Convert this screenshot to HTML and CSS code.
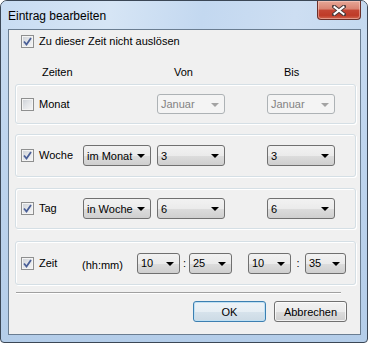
FILE: index.html
```html
<!DOCTYPE html>
<html lang="de">
<head>
  <meta charset="UTF-8">
  <meta name="viewport" content="width=device-width, initial-scale=1.0">
  <title>Eintrag bearbeiten</title>
  <link rel="stylesheet" href="styles.css">
</head>
<body>

<div class="window">
  <div class="titlebar">
    <span class="title">Eintrag bearbeiten</span>
    <div class="close-btn">
      <svg width="14" height="11" viewBox="0 0 14 11">
        <path d="M2 1.5 L12 9.5 M12 1.5 L2 9.5" stroke="#4a3a3a" stroke-width="4" stroke-linecap="square"/>
        <path d="M2.5 2 L11.5 9 M11.5 2 L2.5 9" stroke="#fff" stroke-width="2" stroke-linecap="square"/>
      </svg>
    </div>
  </div>

  <div class="client">
    <div class="option top-option">
      <span class="check checked"><svg width="9" height="9" viewBox="0 0 9 9"><path d="M1 4.5 L3.5 7.5 L8 1" fill="none" stroke="#4a5f97" stroke-width="1.8"/></svg></span>
      Zu dieser Zeit nicht auslösen
    </div>

    <div class="headers">
      <span class="h-zeiten">Zeiten</span>
      <span class="h-von">Von</span>
      <span>Bis</span>
    </div>

    <div class="group group-monat">
      <div class="option row-label"><span class="check"></span>Monat</div>
      <div class="slot"></div>
      <div class="combo disabled"><span class="combo-text">Januar</span><i class="arrow"></i></div>
      <div class="combo disabled bis"><span class="combo-text">Januar</span><i class="arrow"></i></div>
    </div>

    <div class="group group-woche">
      <div class="option row-label"><span class="check checked"><svg width="9" height="9" viewBox="0 0 9 9"><path d="M1 4.5 L3.5 7.5 L8 1" fill="none" stroke="#4a5f97" stroke-width="1.8"/></svg></span>Woche</div>
      <div class="combo"><span class="combo-text">im Monat</span><i class="arrow"></i></div>
      <div class="combo"><span class="combo-text">3</span><i class="arrow"></i></div>
      <div class="combo bis"><span class="combo-text">3</span><i class="arrow"></i></div>
    </div>

    <div class="group group-tag">
      <div class="option row-label"><span class="check checked"><svg width="9" height="9" viewBox="0 0 9 9"><path d="M1 4.5 L3.5 7.5 L8 1" fill="none" stroke="#4a5f97" stroke-width="1.8"/></svg></span>Tag</div>
      <div class="combo"><span class="combo-text">in Woche</span><i class="arrow"></i></div>
      <div class="combo"><span class="combo-text">6</span><i class="arrow"></i></div>
      <div class="combo bis"><span class="combo-text">6</span><i class="arrow"></i></div>
    </div>

    <div class="group group-zeit">
      <div class="option row-label zeit-label"><span class="check checked"><svg width="9" height="9" viewBox="0 0 9 9"><path d="M1 4.5 L3.5 7.5 L8 1" fill="none" stroke="#4a5f97" stroke-width="1.8"/></svg></span>Zeit</div>
      <span class="hhmm">(hh:mm)</span>
      <div class="combo small"><span class="combo-text">10</span><i class="arrow"></i></div>
      <span class="colon">:</span>
      <div class="combo small"><span class="combo-text">25</span><i class="arrow"></i></div>
      <div class="combo small bis-time"><span class="combo-text">10</span><i class="arrow"></i></div>
      <span class="colon wide">:</span>
      <div class="combo small last"><span class="combo-text">35</span><i class="arrow"></i></div>
    </div>

    <div class="separator"></div>

    <div class="buttons">
      <button class="btn default">OK</button>
      <button class="btn">Abbrechen</button>
    </div>
  </div>
</div>

</body>
</html>
```

FILE: styles.css
```css
body {
  margin: 0;
  font-family: "Liberation Sans", Arial, sans-serif;
  font-size: 11px;
  color: #000;
}

.window {
  width: 368px;
  height: 343px;
  box-sizing: border-box;
  border: 1px solid #3b4756;
  border-radius: 7px 7px 4px 4px;
  background: linear-gradient(to bottom, #c9dcf1 0%, #bfd5ee 40%, #b4cde9 100%);
  overflow: hidden;
}

.titlebar {
  height: 28px;
  display: flex;
  justify-content: space-between;
  align-items: flex-start;
  background: linear-gradient(100deg, #c8dcf2 0%, #d6e5f5 30%, #c3d8f0 55%, #cddef2 80%, #c4d9ef 100%);
}

.title {
  font-size: 12px;
  line-height: 20px;
  padding: 5px 0 0 7px;
  color: #000;
}

.close-btn {
  width: 44px;
  height: 19px;
  margin-right: 6px;
  box-sizing: border-box;
  border: 1px solid #6b302a;
  border-top: none;
  border-radius: 0 0 4px 4px;
  background: linear-gradient(to bottom, #e6a797 0%, #d98371 45%, #c44634 50%, #bf3b28 80%, #d06650 100%);
  box-shadow: inset 0 0 0 1px rgba(255, 220, 210, 0.45);
  display: flex;
  align-items: center;
  justify-content: center;
}

.client {
  width: 353px;
  height: 306px;
  margin-left: 7px;
  box-sizing: border-box;
  border: 1px solid #6a7d91;
  background: #f0f0f0;
}

.option {
  display: flex;
  align-items: center;
  gap: 5px;
  line-height: 13px;
}

.top-option {
  margin: 5px 0 0 12px;
}

.check {
  width: 13px;
  height: 13px;
  box-sizing: border-box;
  border: 1px solid #8e8f8f;
  background: linear-gradient(135deg, #cbcfd5 0%, #e4e6e9 50%, #f6f6f6 100%);
  box-shadow: inset 0 0 0 1px #f4f4f4;
  display: flex;
  align-items: center;
  justify-content: center;
  flex: none;
}

.headers {
  display: flex;
  margin: 18px 0 0 33px;
  line-height: 13px;
}

.h-zeiten {
  width: 132px;
}

.h-von {
  width: 110px;
}

.group {
  width: 341px;
  margin: 5px 0 0 6px;
  box-sizing: border-box;
  border: 1px solid #d5dfe5;
  border-radius: 3px;
  box-shadow: inset 1px 1px 0 #fff, 1px 1px 0 #fff;
  display: flex;
  align-items: center;
  padding-left: 5px;
}

.group-monat {
  height: 40px;
}

.group-woche {
  height: 43px;
  margin-top: 10px;
}

.group-tag {
  height: 41px;
  margin-top: 11px;
}

.group-zeit {
  height: 44px;
  margin-top: 12px;
}

.row-label {
  width: 62px;
  flex: none;
}

.zeit-label {
  width: 61px;
}

.slot {
  width: 68px;
  margin-right: 6px;
}

.combo {
  width: 68px;
  height: 21px;
  margin-right: 6px;
  box-sizing: border-box;
  border: 1px solid #707070;
  border-radius: 3px;
  background: linear-gradient(to bottom, #f2f2f2 0%, #ebebeb 50%, #dddddd 50%, #cfcfcf 100%);
  display: flex;
  align-items: center;
  flex: none;
}

.combo.bis {
  margin-left: 36px;
}

.combo.disabled {
  height: 20px;
  border-color: #adb2b5;
  background: #f4f4f4;
  color: #838383;
}

.combo-text {
  flex: 1;
  padding-left: 3px;
  overflow: hidden;
  white-space: nowrap;
  font-size: 11px;
}

.arrow {
  width: 0;
  height: 0;
  border-left: 4px solid transparent;
  border-right: 4px solid transparent;
  border-top: 4px solid #000;
  margin: 1px 5px 0 3px;
}

.disabled .arrow {
  border-top-color: #a3a3a3;
}

.hhmm {
  width: 55px;
  flex: none;
  padding-top: 3px;
}

.combo.small {
  width: 43px;
  margin-right: 0;
}

.combo.small.last {
  width: 41px;
}

.combo.small .arrow {
  margin-left: 2px;
}

.combo.bis-time {
  margin-left: 16px;
}

.colon {
  width: 9px;
  text-align: center;
  flex: none;
}

.colon.wide {
  width: 14px;
}

.separator {
  width: 325px;
  margin: 7px 0 0 7px;
  border-top: 1px solid #a0a0a0;
  border-bottom: 1px solid #fff;
}

.buttons {
  display: flex;
  gap: 8px;
  margin: 7px 0 0 184px;
}

.btn {
  width: 73px;
  height: 21px;
  padding: 0;
  font-family: inherit;
  font-size: 11px;
  color: #000;
  border: 1px solid #707070;
  border-radius: 3px;
  background: linear-gradient(to bottom, #f2f2f2 0%, #ebebeb 50%, #dddddd 50%, #cfcfcf 100%);
  box-shadow: inset 0 0 0 1px rgba(255, 255, 255, 0.7);
}

.btn.default {
  border-color: #3c7fb1;
  background: linear-gradient(to bottom, #eef3f7 0%, #e6eef4 50%, #d7e3ec 50%, #ccdae5 100%);
  box-shadow: inset 0 0 0 1px #bfe0f3;
}
```
